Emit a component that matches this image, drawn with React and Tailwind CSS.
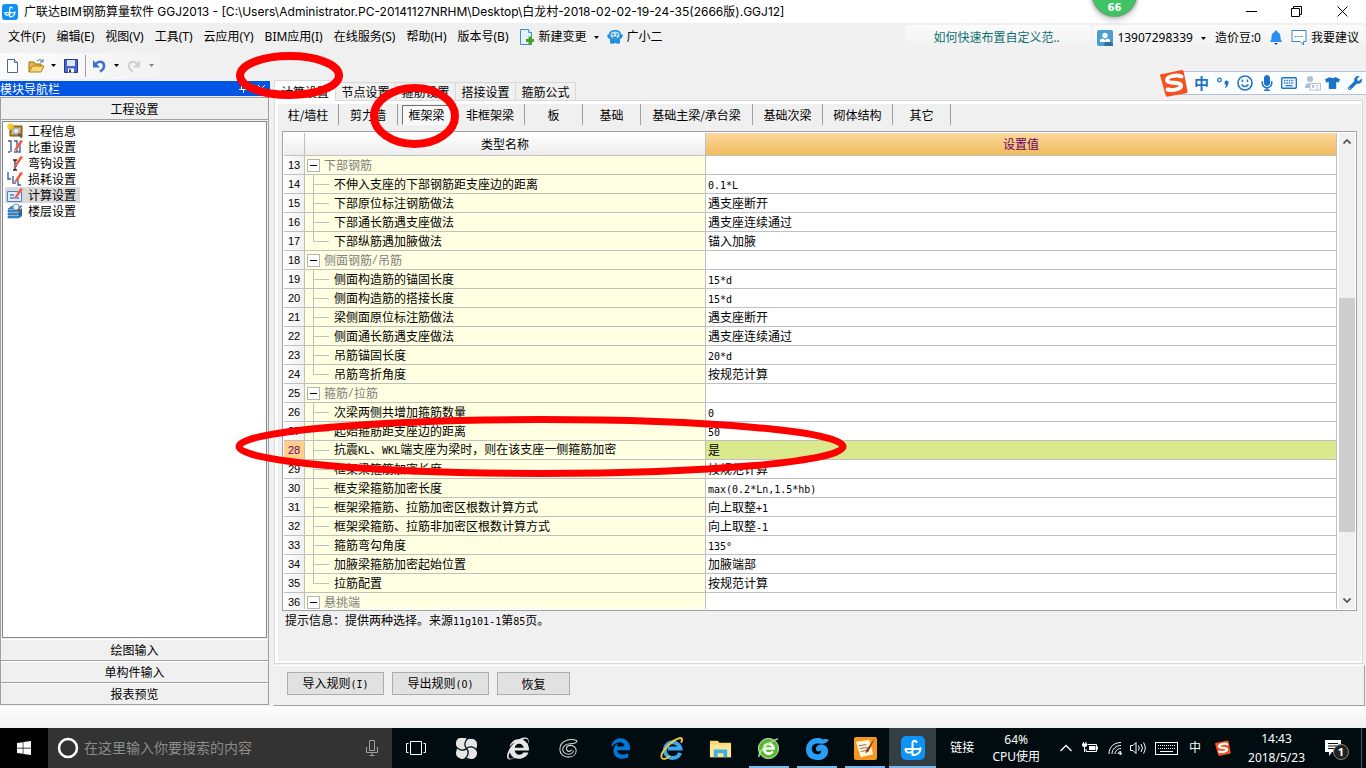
import React, { useState } from 'react';
import { FaWindows, FaTshirt, FaMicrophone, FaWrench, FaInternetExplorer, FaEdgeLegacy } from 'react-icons/fa';

const menus = ['文件(F)', '编辑(E)', '视图(V)', '工具(T)', '云应用(Y)', 'BIM应用(I)', '在线服务(S)', '帮助(H)', '版本号(B)'];
const tabs = ['计算设置', '节点设置', '箍筋设置', '搭接设置', '箍筋公式'];

const members = [
  { name: '柱/墙柱', width: 'w-[61px]' },
  { name: '剪力墙', width: 'w-[59px]' },
  { name: '框架梁', width: 'w-[58px]' },
  { name: '非框架梁', width: 'w-[69px]' },
  { name: '板', width: 'w-[58px]' },
  { name: '基础', width: 'w-[58px]' },
  { name: '基础主梁/承台梁', width: 'w-[112px]' },
  { name: '基础次梁', width: 'w-[70px]' },
  { name: '砌体结构', width: 'w-[70px]' },
  { name: '其它', width: 'w-[58px]' },
];

const rows = [
  { no: 13, name: '下部钢筋', group: true },
  { no: 14, name: '不伸入支座的下部钢筋距支座边的距离', value: '0.1*L' },
  { no: 15, name: '下部原位标注钢筋做法', value: '遇支座断开' },
  { no: 16, name: '下部通长筋遇支座做法', value: '遇支座连续通过' },
  { no: 17, name: '下部纵筋遇加腋做法', value: '锚入加腋', last: true },
  { no: 18, name: '侧面钢筋/吊筋', group: true },
  { no: 19, name: '侧面构造筋的锚固长度', value: '15*d' },
  { no: 20, name: '侧面构造筋的搭接长度', value: '15*d' },
  { no: 21, name: '梁侧面原位标注筋做法', value: '遇支座断开' },
  { no: 22, name: '侧面通长筋遇支座做法', value: '遇支座连续通过' },
  { no: 23, name: '吊筋锚固长度', value: '20*d' },
  { no: 24, name: '吊筋弯折角度', value: '按规范计算', last: true },
  { no: 25, name: '箍筋/拉筋', group: true },
  { no: 26, name: '次梁两侧共增加箍筋数量', value: '0' },
  { no: 27, name: '起始箍筋距支座边的距离', value: '50' },
  { no: 28, name: '抗震KL、WKL端支座为梁时，则在该支座一侧箍筋加密', value: '是' },
  { no: 29, name: '框架梁箍筋加密长度', value: '按规范计算' },
  { no: 30, name: '框支梁箍筋加密长度', value: 'max(0.2*Ln,1.5*hb)' },
  { no: 31, name: '框架梁箍筋、拉筋加密区根数计算方式', value: '向上取整+1' },
  { no: 32, name: '框架梁箍筋、拉筋非加密区根数计算方式', value: '向上取整-1' },
  { no: 33, name: '箍筋弯勾角度', value: '135°' },
  { no: 34, name: '加腋梁箍筋加密起始位置', value: '加腋端部' },
  { no: 35, name: '拉筋配置', value: '按规范计算', last: true },
  { no: 36, name: '悬挑端', group: true },
];

// latin runs are set in a half-width face next to the 12px han characters
const Mixed = ({ text }) =>
  text.split(/([\x20-\x7e°]+)/).map((part, i) =>
    i % 2 ? (
      <span key={i} className="font-['DejaVu_Sans_Mono','Noto_Sans_CJK_SC',monospace] text-[10px]">{part}</span>
    ) : (
      part
    )
  );

const Caret = ({ className = 'text-black' }) => (
  <svg className={`h-[3px] w-[5px] shrink-0 ${className}`} viewBox="0 0 5 3">
    <path d="M0 0h5L2.500 3z" fill="currentColor" />
  </svg>
);

const AppLogo = ({ className }) => (
  <svg className={className} viewBox="0 0 24 24">
    <rect width="24" height="24" rx="5" fill="#0d93f5" />
    <path d="M15.500 6c-1-2-4-1.500-4 1v12M4.500 13h15M4.500 13c0 4.500 5 4.500 7 2M19.500 12c0 5-4 7.500-8 7" fill="none" stroke="#fff" strokeWidth="2" strokeLinecap="round" />
  </svg>
);

const SogouS = ({ className }) => (
  <svg className={className} viewBox="0 0 28 28">
    <path d="M3 5 21.500 1a2 2 0 0 1 2.200 1.500L27.500 22a2 2 0 0 1-1.500 2.200L8 27.500A2 2 0 0 1 5.500 26L.5 8A2 2 0 0 1 3 5z" fill="#f4511e" />
    <path d="M21.500 7.500C16 5 6.500 7.500 7 11.500c.5 3.500 13.500 1 14 5 .4 3.500-8 5.500-13.500 4" fill="none" stroke="#fff" strokeWidth="4" strokeLinecap="round" />
  </svg>
);

const Pencil = () => (
  <path d="M8 9.500 13.500 1 16 2 10 10.500 7 12z" fill="#ec4f36" stroke="#f9a48f" strokeWidth=".6" />
);

const navItems = [
  {
    name: '工程信息',
    icon: (
      <>
        <path d="M3 3h12v10H3z" fill="#c48d26" stroke="#6d4b10" />
        <path d="M5 5h8v6H5z" fill="#f3dc93" />
        <path d="M3.500 0v7M0 3.500h7M1 1l5 5M6 1 1 6" stroke="#f2c81a" strokeWidth="1.300" />
        <circle cx="9" cy="8" r="3.200" fill="#dcecfa" stroke="#7d8fa8" />
        <path d="m11.500 10.500 3.500 4" stroke="#6b5540" strokeWidth="2" />
      </>
    ),
  },
  {
    name: '比重设置',
    icon: (
      <>
        <path d="M1 2h3v11M3 13H1M7 2h3v11H7M13 5v8h-2" fill="none" stroke="#3b5f9e" strokeWidth="1.400" />
        <Pencil />
      </>
    ),
  },
  {
    name: '弯钩设置',
    icon: (
      <>
        <path d="M6 5h4M8 5v10M6 15h4M7 11h3" fill="none" stroke="#222" strokeWidth="1.300" />
        <Pencil />
      </>
    ),
  },
  {
    name: '损耗设置',
    icon: (
      <>
        <path d="M1 1v7h3M6 5v7h3M11 8v6h3" fill="none" stroke="#3b5f9e" strokeWidth="1.400" />
        <Pencil />
      </>
    ),
  },
  {
    name: '计算设置',
    icon: (
      <>
        <path d="M.5 4.500h14v10H.5z" fill="#dcebfa" stroke="#4f81c5" />
        <path d="M3 8h4M3 11h9" stroke="#4f81c5" strokeWidth="1.400" />
        <Pencil />
      </>
    ),
  },
  {
    name: '楼层设置',
    icon: (
      <>
        <path d="m1 6 4-3h10l-3 3zM1 7h11v2H1zM1 10h11v2H1zM1 13h11v2H1z" fill="#3c8dcc" stroke="#226aa5" strokeWidth=".6" />
        <path d="m12 7 3-2v8l-3 2z" fill="#226aa5" />
        <circle cx="9" cy="4" r="3" fill="#e7f2fb" stroke="#8496ab" />
        <path d="m11 6 3 3" stroke="#7b5b36" strokeWidth="2" />
      </>
    ),
  },
];

const TitleBar = () => (
  <header className="flex h-[23px] shrink-0 items-center bg-white pl-[2px]">
    <AppLogo className="h-4 w-4" />
    <h1 className="ml-[6px] flex-1 truncate font-['Inter','Noto_Sans_CJK_SC',sans-serif] text-[12px] leading-[20px]">
      广联达BIM钢筋算量软件 GGJ2013 - [C:\Users\Administrator.PC-20141127NRHM\Desktop\白龙村-2018-02-02-19-24-35(2666版).GGJ12]
    </h1>
    <button aria-label="最小化" className="flex w-[46px] justify-center">
      <svg className="h-[11px] w-[11px]" viewBox="0 0 11 11"><path d="M0 5.500h11" stroke="#000" /></svg>
    </button>
    <button aria-label="还原" className="flex w-[44px] justify-center">
      <svg className="h-[11px] w-[11px]" viewBox="0 0 11 11"><path d="M.5 2.500h8v8h-8zM2.500 2.500v-2h8v8h-2" fill="none" stroke="#000" /></svg>
    </button>
    <button aria-label="关闭" className="flex w-[48px] justify-center">
      <svg className="h-[11px] w-[11px]" viewBox="0 0 11 11"><path d="m.5.5 10 10m0-10-10 10" stroke="#000" /></svg>
    </button>
  </header>
);

const MenuBar = () => (
  <nav className="flex h-[28px] shrink-0 items-center whitespace-nowrap pl-2 font-['Noto_Sans','Noto_Sans_CJK_SC',sans-serif] text-[12px]">
    <div className="flex gap-[11px]">
      {menus.map((m) => (
        <button key={m}>{m}</button>
      ))}
    </div>
    <button className="ml-[11px] flex items-center">
      <svg className="mr-[5px] h-4 w-[14px]" viewBox="0 0 14 16">
        <path d="M.5.5h8l3 3v12H.5z" fill="#e3f2fd" stroke="#3e8fc4" />
        <path d="M8.500.5v3h3" fill="#fff" stroke="#3e8fc4" />
        <path d="M10 7.500v8M6 11.500h8" stroke="#43a520" strokeWidth="3" />
      </svg>
      新建变更
      <span className="ml-[7px]"><Caret /></span>
    </button>
    <button className="ml-2 flex items-center">
      <svg className="mr-1 h-4 w-4" viewBox="0 0 16 16">
        <path d="M8 1C4 1 2 3 2 5L0 6l1 3 2 1v4l2 1 3-1 3 1 2-1v-4l2-1 1-3-2-1c0-2-2-4-6-4z" fill="#2191df" />
        <ellipse cx="8" cy="6" rx="4.500" ry="3.500" fill="#b9e2fb" />
        <path d="M6 4.500v2M10 4.500v2M6 8q2 1.500 4 0" fill="none" stroke="#0b5594" />
      </svg>
      广小二
    </button>
    <div className="ml-auto flex h-[26px] items-center gap-px self-end">
      <a href="#help" className="flex h-full w-[187px] items-center rounded-t bg-linear-to-b from-[#fbfbfb] to-[#f0f0f0] pl-7 text-[#0e7070]">如何快速布置自定义范..</a>
      <div className="flex h-full items-center rounded-t bg-linear-to-b from-[#fbfbfb] to-[#f0f0f0] pl-1 pr-[7px]">
        <button className="flex items-center">
          <svg className="mr-1 h-4 w-4" viewBox="0 0 16 16">
            <rect width="16" height="16" rx="2" fill="#4b9fce" />
            <path d="m8 12 5-1 3 3v2H7z" fill="#2c7099" />
            <circle cx="8" cy="5.500" r="2.700" fill="#fff" />
            <path d="M3 12V9.500l3-1 2 1.500 2-1.500 3 1V12z" fill="#fff" />
          </svg>
          13907298339
          <span className="ml-2"><Caret /></span>
        </button>
        <span className="ml-[9px]">造价豆:0</span>
        <svg className="ml-2 h-4 w-[14px]" viewBox="0 0 14 16">
          <path d="M7 .5c1 0 1.500.6 1.500 1.500C11 3 11.500 5 11.500 8c0 2 1.500 3 1.500 4H1c0-1 1.500-2 1.500-4 0-3 .5-5 3-6C5.500 1 6 .5 7 .5z" fill="#2a8df0" />
          <path d="M5 13h4l-2 2z" fill="#14539a" />
        </svg>
        <button className="ml-2 flex items-center">
          <svg className="mr-1 h-4 w-4" viewBox="0 0 16 16">
            <path d="M1 .5h14v11h-2.500v3.500L9 11.500H1z" fill="#fff" stroke="#3c7fd0" />
            <path d="M3.500 6.500h9" stroke="#3c7fd0" strokeDasharray="2 1" />
          </svg>
          我要建议
        </button>
      </div>
    </div>
  </nav>
);

const ToolBar = () => (
  <div className="flex h-[29px] shrink-0 items-center">
    <div className="flex h-[26px] w-[160px] items-center rounded-r bg-linear-to-r from-[#fbfbfb] to-[#f3f3f3] pl-[6px]">
      <button aria-label="新建">
        <svg className="h-4 w-[14px]" viewBox="0 0 14 16">
          <path d="M1.500 1.500h7l3 3v10h-10z" fill="#fff" stroke="#4c6a86" />
          <path d="M8.500 1.500v3h3" fill="#cfdde9" stroke="#4c6a86" />
        </svg>
      </button>
      <button aria-label="打开" className="ml-2 flex items-center gap-[6px]">
        <svg className="h-4 w-[17px]" viewBox="0 0 17 16">
          <path d="M1 14V4h5l1 2h6v3" fill="#e9b949" stroke="#9b6c14" />
          <path d="m1 14 3.500-6H16l-3 6z" fill="#fbd877" stroke="#b07f1e" />
          <path d="M9 3q3-3 5.500 0M15 1v3h-3" fill="none" stroke="#4d7296" />
        </svg>
        <Caret />
      </button>
      <button aria-label="保存" className="ml-[7px]">
        <svg className="h-4 w-4" viewBox="0 0 16 16">
          <path d="M1.500 1.500h13v13h-13z" fill="#4a64c8" stroke="#27388f" />
          <path d="M4 2h8v6H4z" fill="#dfe6fb" />
          <path d="M5 10.500h6v4H5z" fill="#fff" />
          <path d="M6 11.500h2v3H6z" fill="#27388f" />
        </svg>
      </button>
      <span className="ml-[6px] h-[22px] w-px bg-[#a0a0a0]" />
      <button aria-label="撤销" className="ml-[6px] flex items-center gap-2">
        <svg className="h-4 w-[14px]" viewBox="0 0 14 16">
          <path d="M4 5.500c4-3 8-2 8 2.500 0 3-2 4.500-4 5.500" fill="none" stroke="#3d72cf" strokeWidth="2.600" />
          <path d="M1 2v7.500h7z" fill="#3d72cf" />
        </svg>
        <Caret />
      </button>
      <button aria-label="恢复操作" className="ml-2 flex items-center gap-2">
        <svg className="h-4 w-[14px]" viewBox="0 0 14 16">
          <path d="M10 5.500C6 2.500 2 3.500 2 8c0 3 2 4.500 4 5.500" fill="none" stroke="#d0d0d0" strokeWidth="2" />
          <path d="M13 2v7.500H6z" fill="#d0d0d0" />
        </svg>
        <Caret className="text-[#808080]" />
      </button>
    </div>
  </div>
);

const NavPanel = ({ current, onSelect }) => (
  <aside className="flex w-[270px] shrink-0 flex-col pb-px pt-px">
    <div className="flex h-[15px] items-center bg-[#0054e3] pr-1 leading-[15px] text-white">
      <span className="flex-1">模块导航栏</span>
      <button aria-label="固定">
        <svg className="h-[9px] w-[9px]" viewBox="0 0 9 9"><path d="M2.500 0v5M6.500 0v5M0 5.500h9M4.500 5v4M2 .5h5" stroke="#fff" /></svg>
      </button>
      <button aria-label="关闭导航栏" className="ml-[9px]">
        <svg className="h-[9px] w-[9px]" viewBox="0 0 9 9"><path d="m1 1 7 7m0-7L1 8" stroke="#fff" /></svg>
      </button>
    </div>
    <div className="mr-px mt-px flex flex-1 flex-col border border-[#a0a0a0] border-b-0">
      <button className="h-[22px] shrink-0 border-b border-[#a0a0a0]">工程设置</button>
      <ul className="m-px flex-1 border border-[#828790] bg-white pl-[2px] pt-px">
        {navItems.map(({ name, icon }) => (
          <li key={name}>
            <button
              className={`flex h-4 items-center gap-[5px] pl-[2px] pr-1 leading-4 ${current === name ? 'bg-[#d9d9d9]' : ''}`}
              onClick={() => onSelect(name)}
            >
              <svg className="h-4 w-4" viewBox="0 0 16 16">{icon}</svg>
              {name}
            </button>
          </li>
        ))}
      </ul>
      {['绘图输入', '单构件输入', '报表预览'].map((t) => (
        <button key={t} className="h-[22px] shrink-0 border-b border-t border-b-[#a0a0a0] border-t-white">{t}</button>
      ))}
    </div>
  </aside>
);

const NameCell = ({ row }) => {
  if (row.group) {
    return (
      <div className="flex h-[18px] items-center pl-[2px] text-[#808080]">
        <button aria-label={`折叠${row.name}`} className="mr-1 flex h-[13px] w-[13px] items-center justify-center border border-[#b4b4b4] bg-white">
          <span className="h-px w-[7px] bg-black" />
        </button>
        <Mixed text={row.name} />
      </div>
    );
  }
  return (
    <div className="flex h-[18px] items-center pl-2">
      <span className="mr-[5px] flex w-4 flex-col self-stretch">
        <span className="h-[10px] border-b border-l border-[#c0c0c0]" />
        {!row.last && <span className="flex-1 border-l border-[#c0c0c0]" />}
      </span>
      <span><Mixed text={row.name} /></span>
    </div>
  );
};

const SettingsTable = () => (
  <div className="ml-1 mr-1 mt-[6px] flex min-h-0 flex-1 border border-[#a0a0aa] bg-white p-px">
    <div className="min-w-0 flex-1 overflow-hidden">
      <table className="w-full table-fixed border-separate border-spacing-0 leading-[18px]">
        <colgroup>
          <col className="w-[21px]" />
          <col className="w-[401px]" />
          <col />
        </colgroup>
        <thead>
          <tr className="h-[23px] bg-linear-to-b from-white to-[#ececec]">
            <th aria-label="序号" className="border-b border-r border-[#c0c0c0] p-0" />
            <th className="border-b border-r border-[#c0c0c0] p-0 font-normal">类型名称</th>
            <th className="border-b border-r border-[#c0c0c0] bg-linear-to-b from-[#fbd79b] to-[#f0bd5c] p-0 font-normal text-[#660066]">设置值</th>
          </tr>
        </thead>
        <tbody>
          {rows.map((row) => {
            const active = row.no === 28;
            return (
              <tr key={row.no} className="h-[19px]">
                <td className={`border-b border-r border-[#c0c0c0] p-0 text-center font-['Liberation_Sans',sans-serif] text-[11px] ${active ? 'bg-[#ffcf8b] text-[#660066]' : 'bg-linear-to-r from-white to-[#f0f0f0]'}`}>{row.no}</td>
                <td className="border-b border-r border-[#c0c0c0] bg-[#ffffe1] p-0"><NameCell row={row} /></td>
                <td className={`border-b border-r border-[#c0c0c0] py-0 pl-[2px] pr-0 ${active ? 'bg-[#d9e98c]' : ''}`}>
                  <div className="h-[18px]">{row.value && <Mixed text={row.value} />}</div>
                </td>
              </tr>
            );
          })}
        </tbody>
      </table>
    </div>
    <div className="ml-[2px] flex w-4 shrink-0 flex-col items-stretch bg-[#f0f0f0]">
      <button aria-label="向上滚动" className="flex h-[17px] items-center justify-center">
        <svg className="h-[5px] w-[8px]" viewBox="0 0 8 5"><path d="m.5 4.500 3.500-3.500 3.500 3.500" fill="none" stroke="#505050" strokeWidth="1.700" /></svg>
      </button>
      <div className="grow-[148]" />
      <div className="grow-[235] bg-[#cdcdcd]" />
      <div className="grow-[60]" />
      <button aria-label="向下滚动" className="flex h-[17px] items-center justify-center">
        <svg className="h-[5px] w-[8px]" viewBox="0 0 8 5"><path d="m.5.5 3.500 3.500L7.500.5" fill="none" stroke="#505050" strokeWidth="1.700" /></svg>
      </button>
    </div>
  </div>
);

const Workspace = () => {
  const [tab, setTab] = useState('计算设置');
  const [member, setMember] = useState('框架梁');

  return (
    <main className="ml-1 flex min-w-0 flex-1 flex-col">
      <div className="flex h-5 shrink-0 items-end leading-[17px]">
        {tabs.map((t) => (
          <button
            key={t}
            onClick={() => setTab(t)}
            className={
              tab === t
                ? 'z-10 -mb-px h-[21px] w-[62px] border border-b-0 border-[#d9d9d9] bg-white'
                : 'h-[18px] w-[60px] border border-b-0 border-l-0 border-[#d9d9d9]'
            }
          >
            {t}
          </button>
        ))}
      </div>
      <section className="mr-[3px] flex min-h-0 flex-1 flex-col border border-[#d9d9d9] bg-white pb-[2px] pl-[3px] pr-px pt-[3px]">
        <div className="flex min-h-0 flex-1 flex-col bg-[#f0f0f0]">
          <div className="flex h-[21px] shrink-0 whitespace-nowrap">
            {members.map(({ name, width }) => (
              <div key={name} className={`flex items-center justify-center border-r border-[#a0a0a0] ${width} ${name === '框架梁' ? 'border-r-transparent' : ''}`}>
                <button
                  onClick={() => setMember(name)}
                  className={`h-5 px-[5px] leading-[18px] ${member === name ? 'border border-b-white border-l-[#707070] border-r-white border-t-[#707070] bg-[#f8f8f8]' : ''}`}
                >
                  {name}
                </button>
              </div>
            ))}
          </div>
          <SettingsTable />
          <p className="h-[50px] shrink-0 pl-[7px] leading-[18px]">
            <Mixed text="提示信息：提供两种选择。来源11g101-1第85页。" />
          </p>
        </div>
      </section>
      <div className="mr-px mt-px flex h-[41px] shrink-0 items-start gap-2 border-b border-r border-t border-b-[#a0a0a0] border-r-[#a0a0a0] border-t-white pl-[13px] pt-[6px]">
        <button className="h-[23px] w-[97px] border border-[#adadad] bg-[#e1e1e1]"><Mixed text="导入规则(I)" /></button>
        <button className="h-[23px] w-[97px] border border-[#adadad] bg-[#e1e1e1]"><Mixed text="导出规则(O)" /></button>
        <button className="h-[23px] w-[73px] border border-[#adadad] bg-[#e1e1e1]">恢复</button>
      </div>
    </main>
  );
};

const ImeBar = () => (
  <div className="absolute right-0 top-[69px] flex h-[28px] items-center text-[#1c74c9]">
    <SogouS className="z-10 h-7 w-7" />
    <div className="-ml-3 flex h-6 items-center border-y border-[#b4c3d6] bg-[#fbfdff] pl-[18px] pr-1">
      <span className="w-[15px] text-center text-[15px] font-bold leading-5">中</span>
      <svg className="ml-2 h-3 w-3" viewBox="0 0 12 12">
        <circle cx="2.500" cy="3" r="1.800" fill="none" stroke="currentColor" strokeWidth="1.300" />
        <path d="M7.500 5.500a2 2 0 1 1 3.800 1c-.3 2-1.300 3.500-3 4.500l-.6-.8c1-.8 1.300-1.500 1.300-2.300-1 0-1.500-1-1.500-2.400z" fill="currentColor" />
      </svg>
      <svg className="ml-2 h-4 w-4" viewBox="0 0 16 16">
        <circle cx="8" cy="8" r="7" fill="none" stroke="currentColor" strokeWidth="1.600" />
        <path d="M5.500 4.500v2.500M10.500 4.500v2.500M4.500 9.500q3.500 4 7 0" fill="none" stroke="currentColor" strokeWidth="1.500" />
      </svg>
      <FaMicrophone className="ml-[7px] h-4 w-[14px]" />
      <svg className="ml-[7px] h-3 w-4" viewBox="0 0 16 12">
        <rect x=".7" y=".7" width="14.600" height="10.600" rx="1" fill="none" stroke="currentColor" strokeWidth="1.400" />
        <path d="M3 3.500h10M3 6h10" stroke="currentColor" strokeWidth="1.400" strokeDasharray="1.400 1" />
        <path d="M4.500 8.700h7" stroke="currentColor" strokeWidth="1.300" />
      </svg>
      <svg className="ml-[7px] h-4 w-[17px] text-[#b3bfd3]" viewBox="0 0 17 16">
        <circle cx="6" cy="4" r="3" fill="currentColor" />
        <path d="M1 13c0-4 2-5 5-5h2v5z" fill="currentColor" />
        <rect x="6" y="8.500" width="10.500" height="6.500" fill="#fff" stroke="currentColor" />
        <path d="M8 10.500h2v1H8.500v1H10M12 10.500h2.500M12 13h2.500" stroke="currentColor" fill="none" />
      </svg>
      <FaTshirt className="ml-1 h-4 w-[15px]" />
      <FaWrench className="ml-2 h-[14px] w-[14px]" />
    </div>
  </div>
);

const SpeedBall = () => (
  <div className="absolute right-[227px] top-[-30px] flex h-[49px] w-[49px] items-end justify-center rounded-full border-2 border-[#c9d2cc] bg-[#3fc463] pb-[3px] font-['DejaVu_Sans',sans-serif] text-[10px] font-bold leading-[12px] text-white shadow-md ring-1 ring-[#7f8f86] ring-inset">
    66
  </div>
);

// red pen rings over the tab, the member button and row 28
const PenMarks = () => (
  <svg className="pointer-events-none absolute left-0 top-0 z-20 h-[500px] w-[860px]" viewBox="0 0 860 500" fill="none" stroke="#f00">
    <ellipse cx="289.500" cy="75.500" rx="49.500" ry="19.500" strokeWidth="8" />
    <ellipse cx="414.500" cy="116" rx="40.500" ry="28" strokeWidth="8" />
    <ellipse cx="541" cy="446.500" rx="302" ry="27" strokeWidth="7" />
  </svg>
);

const apps = [
  {
    name: '风扇', width: 'w-[52px]',
    icon: (
      <>
        <path d="M6 1h4c2 0 2 1 3 1l6 0c3 1 4 3 4 6s-1 4-1 5 1 2 1 4c0 4-3 6-6 6-2 0-3-1-4-1s-3 1-6 1c-4-1-6-3-6-6 0-2 1-3 1-5S1 9 1 7c0-4 2-6 5-6z" fill="#e6e6e6" />
        <path d="M12 12C9 9 10 4 14 1M12 12c3-3 8-2 11 2M12 12c3 3 2 8-2 11M12 12c-3 3-8 2-11-2" fill="none" stroke="#000c10" strokeWidth="1.300" />
      </>
    ),
  },
  { name: '浏览器', width: 'w-[51px]', glyph: <FaInternetExplorer className="h-[23px] w-[22px] text-[#e8e8e8]" /> },
  {
    name: '广联达', width: 'w-[50px]',
    icon: <path d="M21 4C15 1 3 3 3 13c0 5 4 8 9 8s8-3 8-7-4-6-8-5c-3 1-3 5 0 6 2 0 3-1 3-2M21 4c-1 3-4 3-7 3-4 0-8 2-8 6 0 3 3 5 6 5s5-2 5-4" fill="none" stroke="#d8d8d8" strokeWidth="1.100" />,
  },
  { name: 'Edge', width: 'w-[54px]', glyph: <FaEdgeLegacy className="h-[21px] w-[21px] text-[#0078d7]" /> },
  {
    name: 'Internet Explorer', width: 'w-[49px]',
    icon: (
      <>
        <path d="M21 16.500a8.200 8.200 0 1 1 .3-4.500H8" fill="none" stroke="#3ba7ee" strokeWidth="4" />
        <path d="M2 22C-1 17 12 3 21 1c3 0 2 3 1 5M2 22c2 2 6 0 8-2" fill="none" stroke="#f3c937" strokeWidth="2" />
      </>
    ),
  },
  {
    name: '资源管理器', width: 'w-[48px]',
    icon: (
      <>
        <path d="M1 4h8l2 2h12v15H1z" fill="#f8d775" />
        <path d="M1 8h22v13H1z" fill="#ffe695" />
        <path d="M5 13h14v8h-4v-4H9v4H5z" fill="#3fb0e6" />
      </>
    ),
  },
  {
    name: '安全浏览器', width: 'w-[49px]', open: true,
    icon: (
      <>
        <circle cx="12" cy="12" r="10.500" fill="#56b82d" stroke="#d9efcf" />
        <path d="M16.500 15a5 5 0 1 1 .8-3H8" fill="none" stroke="#fff" strokeWidth="2.800" />
        <path d="M2 21C1 15 14 4 22 2" fill="none" stroke="#b5e69a" strokeWidth="1.500" />
      </>
    ),
  },
  {
    name: '广联达服务', width: 'w-[48px]', open: true,
    icon: (
      <>
        <path d="M24 3c-3-1-4-1-6-.5C8-2 0 5 0 13c0 7 5 11 12 11s11-4 11-9c0-6-6-9-11-6-3 2-2 6 1 6 2 0 2-1 3-1 0 3-2 4-4 4-4 0-6-3-6-6 0-4 4-6 9-5 4 0 7-1 9-4z" fill="#2a9df4" />
      </>
    ),
  },
  {
    name: '写字板', width: 'w-[48px]', open: true,
    icon: (
      <>
        <rect width="24" height="24" rx="2" fill="#f5981d" />
        <path d="m2 5 14-2 4 15-13 3z" fill="#fff6df" />
        <path d="m5 9 8-1M6 12l8-1M7 15l7-1" stroke="#8d6f3f" />
        <path d="m22 1-9 12-1 4 3-2z" fill="#9c2b13" />
      </>
    ),
  },
];

const TaskBar = () => (
  <footer className="flex h-10 shrink-0 items-stretch whitespace-nowrap bg-[#000c10] font-['Noto_Sans','Noto_Sans_CJK_SC',sans-serif] text-[12px] text-white">
    <button aria-label="开始" className="flex w-12 items-center justify-center bg-black"><FaWindows className="h-4 w-4" /></button>
    <label className="flex w-[344px] items-center bg-[#333] pl-[9px] pr-[14px]">
      <svg className="h-[22px] w-[22px]" viewBox="0 0 22 22"><circle cx="11" cy="11" r="9" fill="none" stroke="#fff" strokeWidth="2.500" /></svg>
      <input type="text" aria-label="搜索" placeholder="在这里输入你要搜索的内容" className="ml-[5px] min-w-0 flex-1 bg-transparent text-[14px] text-white outline-none placeholder:text-[#8c8c8c]" />
      <svg className="h-4 w-3" viewBox="0 0 12 16" fill="none" stroke="#a0a0a0">
        <path d="M3.500.5h5v10h-5zM.5 7v5.500h11V7M6 12.500v3M3.500 15.500h5" />
      </svg>
    </label>
    <button aria-label="任务视图" className="flex w-12 items-center justify-center">
      <svg className="h-[14px] w-5" viewBox="0 0 20 14"><path d="M4.500.5h11v13h-11zM2.500 2.500h-2v9h2M17.500 2.500h2v9h-2" fill="none" stroke="#fff" /></svg>
    </button>
    {apps.map((app) => (
      <button key={app.name} aria-label={app.name} className={`flex flex-col items-center ${app.width}`}>
        <span className="flex flex-1 items-center">
          {app.glyph || <svg className="h-[23px] w-[23px]" viewBox="0 0 24 24">{app.icon}</svg>}
        </span>
        {app.open && <span className="-mt-[2px] h-[2px] w-10 bg-[#76b9ed]" />}
      </button>
    ))}
    <button aria-label="GGJ2013" className="flex w-[47px] items-center justify-center border-b-2 border-[#76b9ed] bg-[#333f43]">
      <AppLogo className="mt-[2px] h-6 w-6" />
    </button>
    <div className="ml-auto flex items-center">
      <span>链接</span>
      <p className="ml-[18px] text-center leading-[17px]">64%<br />CPU使用</p>
      <svg className="ml-[20px] h-2 w-3" viewBox="0 0 12 8"><path d="m.5 7 5.500-5.500L11.500 7" fill="none" stroke="#fff" strokeWidth="1.300" /></svg>
      <svg className="ml-[10px] h-3 w-4" viewBox="0 0 16 12">
        <path d="M5.500 2.500h9v7H4V7" fill="none" stroke="#fff" />
        <path d="M7 4h6.500v4H7zM15 4.500h1v3h-1zM0 1.500h5v2.500l-2.500 1.500L0 4zM1 0h1v2H1zM3.500 0h1v2h-1zM2 5h1v5H2z" fill="#fff" />
      </svg>
      <svg className="ml-[10px] h-[14px] w-[14px]" viewBox="0 0 14 14" fill="none" stroke="#fff">
        <path d="M1 13C1 6 6 1.500 13 1.500M4 13c0-5 4-8.500 9-8.500M7 13c0-3 2.500-5.500 6-5.500M10 13c0-1.500 1-2.500 3-2.500" />
        <circle cx="12.500" cy="12.500" r="1" fill="#fff" />
      </svg>
      <svg className="ml-2 h-[14px] w-4" viewBox="0 0 16 14" fill="none" stroke="#fff">
        <path d="M.5 4.500H3l3-3v11l-3-3H.5zM8.500 4.500q1.500 2.500 0 5M11 3q3 4 0 8M13.500 1.500q3.500 5.500 0 11" />
      </svg>
      <svg className="ml-[9px] h-[13px] w-[23px]" viewBox="0 0 23 13">
        <rect x=".5" y=".5" width="22" height="12" fill="none" stroke="#fff" />
        <path d="M3 3.500h17M3 6.500h17" stroke="#fff" strokeDasharray="1 1" />
        <path d="M5 9.500h13" stroke="#fff" />
      </svg>
      <span className="ml-[11px]">中</span>
      <SogouS className="ml-[14px] h-4 w-4" />
      <p className="ml-[17px] text-center leading-[19px]">14:43<br />2018/5/23</p>
      <button aria-label="通知" className="relative ml-[20px] h-6 w-6">
        <svg className="h-4 w-4" viewBox="0 0 16 16">
          <path d="M0 0h16v12H7l-3 4v-4H0z" fill="#fff" />
          <path d="M3 3.500h10M3 6h10M3 8.500h7" stroke="#111" />
        </svg>
        <span className="absolute left-[8px] top-[8px] h-4 w-4 rounded-full border border-[#888] bg-[#222] text-[11px] font-bold leading-[14px]">1</span>
      </button>
      <span className="ml-[12px] mr-1 h-10 w-px bg-[#555]" />
    </div>
  </footer>
);

export default function App() {
  const [current, setCurrent] = useState('计算设置');

  return (
    <div className="relative flex h-screen flex-col overflow-hidden bg-[#f0f0f0] font-['Noto_Sans_CJK_SC',sans-serif] text-[12px] leading-[18px] text-black">
      <TitleBar />
      <MenuBar />
      <ToolBar />
      <div className="flex min-h-0 flex-1">
        <NavPanel current={current} onSelect={setCurrent} />
        <Workspace />
      </div>
      <div className="h-[22px] shrink-0 bg-linear-to-b from-[#fdfdfd] to-[#f2f2f2]" />
      <TaskBar />
      <SpeedBall />
      <ImeBar />
      <PenMarks />
    </div>
  );
}
